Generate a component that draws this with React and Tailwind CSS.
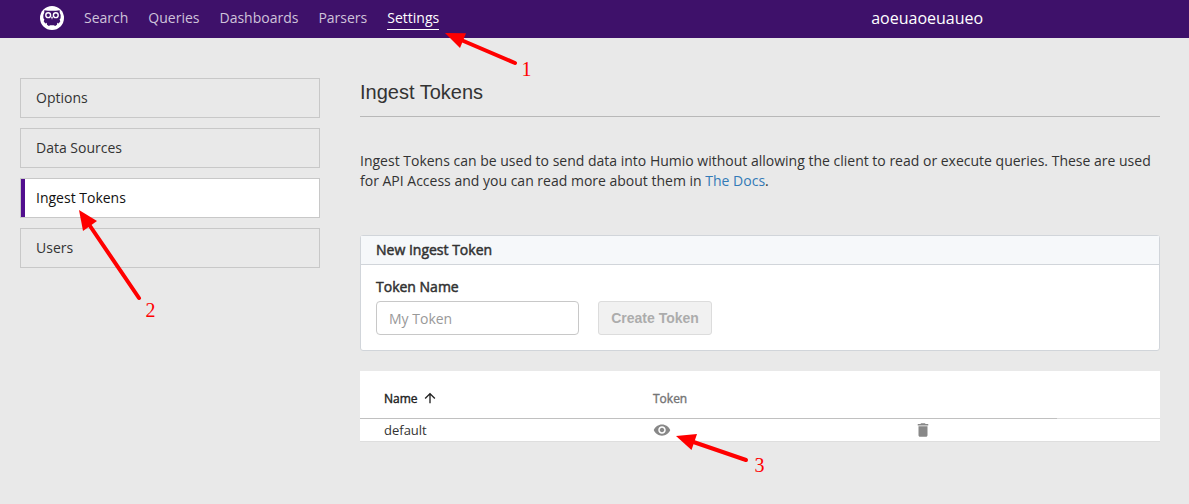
const bold = "[-webkit-text-stroke:0.5px_currentColor]";

function Owl() {
  return (
    <svg className="h-6 w-6" viewBox="0 0 24 24">
      <circle cx="12" cy="12" r="12" fill="#fff" />
      <path
        d="M4.300 4.300 L8 4.800 H16 L19.700 4.300 V6.500 Q21.300 9 20.600 12.200 L19.600 13.500 L20.300 15.200 L18.700 17.400 L17.300 16.800 L17 18.700 L15.200 19.900 L13.800 19.200 H10.200 L8.800 19.900 L7 18.700 L6.700 16.800 L5.300 17.400 L3.700 15.200 L4.400 13.500 L3.400 12.200 Q2.700 9 4.300 6.500 Z"
        fill="#3e116a"
      />
      <circle cx="8.200" cy="9.200" r="2.400" fill="none" stroke="#fff" strokeWidth="1.400" />
      <circle cx="15.800" cy="9.200" r="2.400" fill="none" stroke="#fff" strokeWidth="1.400" />
      <path d="M11 10.800 H13 L12 13.800 Z" fill="#fff" />
    </svg>
  );
}

function Arrow({ line, head }) {
  return (
    <g>
      <path d={line} stroke="#f00" strokeWidth="4" strokeLinecap="round" fill="none" />
      <path d={head} fill="#f00" />
    </g>
  );
}

function Annotations() {
  return (
    <svg className="pointer-events-none absolute left-0 top-0 h-[504px] w-[1189px]" viewBox="0 0 1189 504">
      <Arrow line="M515 63 L460 39.500" head="M445 33 L466 33.300 L460 48 Z" />
      <Arrow line="M139 298 L88 223" head="M79 210 L97 221 L83 231 Z" />
      <Arrow line="M746 460 L692 441.500" head="M676 436 L697 434 L691.500 450 Z" />
      <g fill="#f00" fontSize="20" fontFamily="'Liberation Serif', serif">
        <text x="521.500" y="76">1</text>
        <text x="145.600" y="317">2</text>
        <text x="754.500" y="472">3</text>
      </g>
    </svg>
  );
}

const nav = ["Search", "Queries", "Dashboards", "Parsers"];
const side = ["Options", "Data Sources", "Ingest Tokens", "Users"];

export default function App() {
  return (
    <div className="relative h-[504px] w-[1189px] overflow-hidden bg-[#e9e9e9] font-['Open_Sans',sans-serif] text-sm leading-5 text-[#333]">
      <header className="flex h-[38px] items-start bg-[#3e116a] pl-10 text-[#cfc3da]">
        <div className="mt-1.5 mr-5">
          <Owl />
        </div>
        <nav className="mt-2 flex gap-5">
          {nav.map((n) => (
            <a key={n}>{n}</a>
          ))}
          <a className="h-[22px] border-b border-white text-white">Settings</a>
        </nav>
        <span className="mt-2 ml-[432px] text-base leading-5 text-white">aoeuaoeuaueo</span>
      </header>

      <div className="flex gap-10 px-5 pt-10">
        <aside className="flex w-[300px] flex-col gap-2.5">
          {side.map((s) =>
            s === "Ingest Tokens" ? (
              <div key={s} className="flex h-10 items-stretch border border-[#c8c8c8] bg-white text-[#111]">
                <span className="w-1 bg-[#520f8e]" />
                <span className="pt-[9px] pl-[11px]">{s}</span>
              </div>
            ) : (
              <div key={s} className="h-10 border border-[#c8c8c8] pt-[9px] pl-[15px]">
                {s}
              </div>
            )
          )}
        </aside>

        <main className="w-[800px]">
          <h1 className="h-[39px] border-b border-[#b8b8b8] pt-0.5 font-['Liberation_Sans',sans-serif] text-[20px] leading-6">
            Ingest Tokens
          </h1>
          <p className="mt-[34px] whitespace-nowrap">
            Ingest Tokens can be used to send data into Humio without allowing the client to read or execute queries. These are used
            <br />
            for API Access and you can read more about them in <a className="text-[#337ab7]">The Docs</a>.
          </p>

          <section className="mt-11 h-[116px] rounded-[3px] border border-[#d1d5da] bg-white">
            <h2 className={`h-[29px] border-b border-[#d1d5da] bg-[#f6f8fa] pt-1 pl-[15px] ${bold}`}>New Ingest Token</h2>
            <div className="flex gap-[19px] pt-3 pl-[15px]">
              <div className="flex flex-col">
                <label className={`h-[24px] ${bold}`}>Token Name</label>
                <input
                  className="h-[34px] w-[203px] rounded border border-[#c8c8c8] bg-white px-3 placeholder:text-[#999]"
                  placeholder="My Token"
                />
              </div>
              <button className="mt-6 h-[34px] w-[114px] rounded-[3px] border border-[#dcdcdc] bg-[#f1f1f1] font-['Liberation_Sans',sans-serif] font-bold text-[#acacac]">
                Create Token
              </button>
            </div>
          </section>

          <section className="mt-5 h-[71px] border-b border-[#dedede] bg-white">
            <div className="flex h-12">
              <div className="flex w-[697px] border-b border-[#c0c0c0] pt-[19px] pl-6 text-xs">
                <div className="flex w-[269px] gap-1 text-[#212121]">
                  <span className="leading-[18px] [-webkit-text-stroke:0.4px_currentColor]">Name</span>
                  <svg className="h-4 w-4" viewBox="0 0 24 24" fill="currentColor">
                    <path d="M4 12l1.410 1.410L11 7.830V20h2V7.830l5.580 5.590L20 12l-8-8-8 8z" />
                  </svg>
                </div>
                <span className="leading-[18px] text-[#757575] [-webkit-text-stroke:0.4px_currentColor]">Token</span>
              </div>
              <div className="flex-1 border-b border-[#dedede]" />
            </div>
            <div className="flex h-[22px] items-center pl-6 text-[13px]">
              <span className="w-[269px]">default</span>
              <span className="w-[261px] text-[#888]">
                <svg className="h-[18px] w-[18px]" viewBox="0 0 24 24" fill="currentColor">
                  <path d="M12 4.500C7 4.500 2.730 7.610 1 12c1.730 4.390 6 7.500 11 7.500s9.270-3.110 11-7.500c-1.730-4.390-6-7.500-11-7.500zM12 17c-2.760 0-5-2.240-5-5s2.240-5 5-5 5 2.240 5 5-2.240 5-5 5zm0-8c-1.660 0-3 1.340-3 3s1.340 3 3 3 3-1.340 3-3-1.340-3-3-3z" />
                </svg>
              </span>
              <svg className="h-[18px] w-[18px] text-[#888]" viewBox="0 0 24 24" fill="currentColor">
                <path d="M6 19c0 1.100.9 2 2 2h8c1.100 0 2-.9 2-2V7H6v12zM19 4h-3.500l-1-1h-5l-1 1H5v2h14V4z" />
              </svg>
            </div>
          </section>
        </main>
      </div>
      <Annotations />
    </div>
  );
}
